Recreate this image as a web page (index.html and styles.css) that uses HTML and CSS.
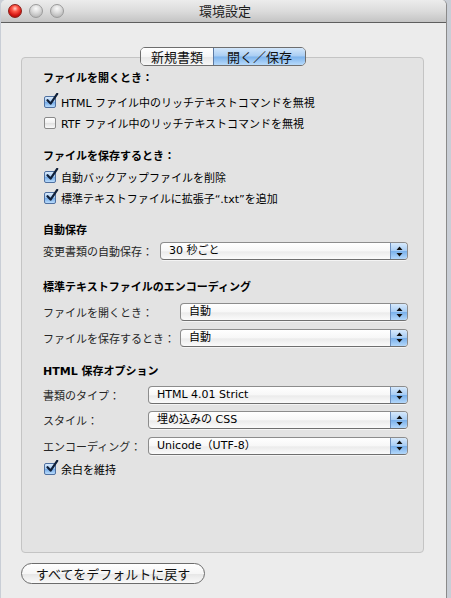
FILE: index.html
```html
<!DOCTYPE html>
<html lang="ja">
<head>
<meta charset="utf-8">
<title>環境設定</title>
<link rel="stylesheet" href="styles.css">
</head>
<body>
<div class="window">
  <div class="titlebar">
    <div class="lights">
      <span class="light red"></span>
      <span class="light gray"></span>
      <span class="light gray"></span>
    </div>
    <div class="title">環境設定</div>
    <div></div>
  </div>
  <div class="content">
    <div class="tabs">
      <span class="tab">新規書類</span><span class="tab active">開く／保存</span>
    </div>
    <div class="group">
      <div class="sec s1">
        <div class="sec-title">ファイルを開くとき：</div>
        <div class="check-row"><span class="cb checked"><svg viewBox="0 0 14 14" width="14" height="14"><path d="M2.5 7.2 L5.6 10.6 L12.2 0.8" fill="none" stroke="#10203a" stroke-width="2.2" stroke-linecap="round" stroke-linejoin="round"/></svg></span><span>HTML ファイル中のリッチテキストコマンドを無視</span></div>
        <div class="check-row"><span class="cb"></span><span>RTF ファイル中のリッチテキストコマンドを無視</span></div>
      </div>
      <div class="sec s2">
        <div class="sec-title">ファイルを保存するとき：</div>
        <div class="check-row"><span class="cb checked"><svg viewBox="0 0 14 14" width="14" height="14"><path d="M2.5 7.2 L5.6 10.6 L12.2 0.8" fill="none" stroke="#10203a" stroke-width="2.2" stroke-linecap="round" stroke-linejoin="round"/></svg></span><span>自動バックアップファイルを削除</span></div>
        <div class="check-row"><span class="cb checked"><svg viewBox="0 0 14 14" width="14" height="14"><path d="M2.5 7.2 L5.6 10.6 L12.2 0.8" fill="none" stroke="#10203a" stroke-width="2.2" stroke-linecap="round" stroke-linejoin="round"/></svg></span><span>標準テキストファイルに拡張子“.txt”を追加</span></div>
      </div>
      <div class="sec s3">
        <div class="sec-title">自動保存</div>
        <div class="popup-row">
          <span class="plabel">変更書類の自動保存：</span>
          <div class="popup"><span class="pval">30 秒ごと</span><span class="parrows"><svg viewBox="0 0 7 11" width="7" height="11"><path d="M3.5 0.5 L6.5 4 L0.5 4 Z M3.5 10.5 L6.5 7 L0.5 7 Z" fill="#111"/></svg></span></div>
        </div>
      </div>
      <div class="sec s4">
        <div class="sec-title">標準テキストファイルのエンコーディング</div>
        <div class="popup-row">
          <span class="plabel">ファイルを開くとき：</span>
          <div class="popup"><span class="pval">自動</span><span class="parrows"><svg viewBox="0 0 7 11" width="7" height="11"><path d="M3.5 0.5 L6.5 4 L0.5 4 Z M3.5 10.5 L6.5 7 L0.5 7 Z" fill="#111"/></svg></span></div>
        </div>
        <div class="popup-row">
          <span class="plabel">ファイルを保存するとき：</span>
          <div class="popup"><span class="pval">自動</span><span class="parrows"><svg viewBox="0 0 7 11" width="7" height="11"><path d="M3.5 0.5 L6.5 4 L0.5 4 Z M3.5 10.5 L6.5 7 L0.5 7 Z" fill="#111"/></svg></span></div>
        </div>
      </div>
      <div class="sec s5">
        <div class="sec-title">HTML 保存オプション</div>
        <div class="popup-row">
          <span class="plabel">書類のタイプ：</span>
          <div class="popup"><span class="pval">HTML 4.01 Strict</span><span class="parrows"><svg viewBox="0 0 7 11" width="7" height="11"><path d="M3.5 0.5 L6.5 4 L0.5 4 Z M3.5 10.5 L6.5 7 L0.5 7 Z" fill="#111"/></svg></span></div>
        </div>
        <div class="popup-row">
          <span class="plabel">スタイル：</span>
          <div class="popup"><span class="pval">埋め込みの CSS</span><span class="parrows"><svg viewBox="0 0 7 11" width="7" height="11"><path d="M3.5 0.5 L6.5 4 L0.5 4 Z M3.5 10.5 L6.5 7 L0.5 7 Z" fill="#111"/></svg></span></div>
        </div>
        <div class="popup-row">
          <span class="plabel">エンコーディング：</span>
          <div class="popup"><span class="pval">Unicode（UTF-8）</span><span class="parrows"><svg viewBox="0 0 7 11" width="7" height="11"><path d="M3.5 0.5 L6.5 4 L0.5 4 Z M3.5 10.5 L6.5 7 L0.5 7 Z" fill="#111"/></svg></span></div>
        </div>
        <div class="check-row last"><span class="cb checked"><svg viewBox="0 0 14 14" width="14" height="14"><path d="M2.5 7.2 L5.6 10.6 L12.2 0.8" fill="none" stroke="#10203a" stroke-width="2.2" stroke-linecap="round" stroke-linejoin="round"/></svg></span><span>余白を維持</span></div>
      </div>
    </div>
    <div class="btn-row"><span class="btn">すべてをデフォルトに戻す</span></div>
  </div>
</div>
</body>
</html>
```

FILE: styles.css
```css
* { box-sizing: border-box; }
html, body { margin: 0; padding: 0; }
body {
  background: #c9ced6;
  width: 451px;
  height: 598px;
  overflow: hidden;
  font-family: "DejaVu Sans", "Noto Sans CJK JP", sans-serif;
  font-size: 11px;
  color: #000;
}
.window {
  margin-left: 1px;
  width: 446px;
  height: 598px;
  background: #ececec;
  border-right: 1px solid #8a8a8a;
  border-radius: 5px 5px 0 0;
  overflow: hidden;
}
.titlebar {
  height: 23px;
  display: grid;
  grid-template-columns: 1fr auto 1fr;
  align-items: center;
  background: linear-gradient(#ececec, #dcdcdc 50%, #c4c4c4);
  border-bottom: 1px solid #5e5e5e;
  border-radius: 5px 5px 0 0;
}
.lights {
  display: flex;
  gap: 7px;
  padding-left: 7px;
  align-items: center;
}
.light {
  width: 14px;
  height: 14px;
  border-radius: 50%;
  display: block;
}
.light.red {
  background: radial-gradient(circle at 50% 30%, #ffd0c8 0, #ff5a4a 28%, #d41612 65%, #8f0a06 100%);
  border: 1px solid #8a1c16;
}
.light.gray {
  background: radial-gradient(circle at 50% 30%, #fafafa 0, #dcdcdc 40%, #b9b9b9 80%, #a4a4a4 100%);
  border: 1px solid #9a9a9a;
}
.title {
  font-family: "Noto Sans CJK JP", sans-serif;
  font-size: 13px;
  color: #1c1c1c;
  line-height: 22px;
  padding-left: 3px;
}
.content {
  padding-top: 24px;
  display: flex;
  flex-direction: column;
}
.tabs {
  align-self: center;
  display: flex;
  height: 19px;
  border: 1px solid #6e6e6e;
  border-radius: 5px;
  overflow: hidden;
  position: relative;
  z-index: 1;
  margin-bottom: -9px;
  margin-left: -1px;
}
.tab {
  font-family: "Noto Sans CJK JP", sans-serif;
  font-size: 13px;
  line-height: 17px;
  color: #111;
  background: linear-gradient(#ffffff, #f5f5f5 50%, #e6e6e6 51%, #f7f7f7);
  width: 72px;
  text-align: center;
}
.tab.active {
  width: 92px;
  border-left: 1px solid #5c7aa4;
  background: linear-gradient(#d3e7fb, #a9cdf3 48%, #7db3ec 52%, #b7dafb);
}
.group {
  margin-left: 20px;
  width: 403px;
  height: 496px;
  background: #e3e3e3;
  border: 1px solid #c4c4c4;
  border-radius: 4px;
  padding: 12px 15px 0 21px;
}
.sec-title {
  height: 18px;
  line-height: 18px;
  font-weight: bold;
  margin-bottom: 3px;
}
.s2 { margin-top: 15px; }
.s2 .sec-title { margin-bottom: 0; }
.s3 { margin-top: 14px; }
.s3 .sec-title { margin-bottom: 1px; }
.s4 { margin-top: 18px; }
.s4 .sec-title { margin-bottom: 5px; }
.s5 { margin-top: 15px; }
.s5 .sec-title { margin-bottom: 4px; }
.check-row {
  height: 21px;
  display: flex;
  align-items: center;
  gap: 5px;
}
.check-row.last { margin-top: -3px; }
.cb {
  position: relative;
  width: 12px;
  height: 12px;
  margin-left: 1px;
  border: 1px solid #8a8a8a;
  border-radius: 2px;
  background: linear-gradient(#ffffff, #f0f0f0 50%, #e2e2e2 55%, #fafafa);
  flex: none;
}
.cb.checked {
  border-color: #4f70a0;
  background: linear-gradient(#d9eafc, #a7cbf2 45%, #79aee9 55%, #b9dbfb);
}
.cb svg {
  position: absolute;
  left: 0;
  top: -4px;
}
.popup-row {
  height: 20px;
  display: flex;
  align-items: center;
  margin-bottom: 5.5px;
}
.plabel {
  color: #262626;
  flex: none;
}
.s3 .plabel { width: 117px; }
.s4 .plabel { width: 137px; }
.s5 .plabel { width: 105px; }
.popup {
  flex: 1;
  height: 18px;
  display: flex;
  border: 1px solid #8c8c8c;
  border-bottom-color: #6f6f6f;
  border-radius: 4px;
  overflow: hidden;
  background: linear-gradient(#ffffff, #f7f7f7 50%, #ebebeb 55%, #fbfbfb);
  box-shadow: 0 1px 0 rgba(255,255,255,0.6);
}
.pval {
  flex: 1;
  padding-left: 8px;
  line-height: 16px;
}
.parrows {
  width: 17px;
  display: flex;
  align-items: center;
  justify-content: center;
  border-left: 1px solid #6d8fbd;
  background: linear-gradient(#d6e9fc, #a8cdf4 48%, #7ab1eb 52%, #b3d7fa);
}
.btn-row {
  padding: 10px 0 0 20px;
}
.btn {
  display: inline-block;
  width: 184px;
  height: 21px;
  border: 1px solid #6c6c6c;
  border-radius: 11px;
  background: linear-gradient(#ffffff, #f6f6f6 50%, #e7e7e7 55%, #fafafa);
  font-family: "Noto Sans CJK JP", sans-serif;
  font-size: 13px;
  line-height: 19px;
  text-align: center;
  color: #111;
}
```
